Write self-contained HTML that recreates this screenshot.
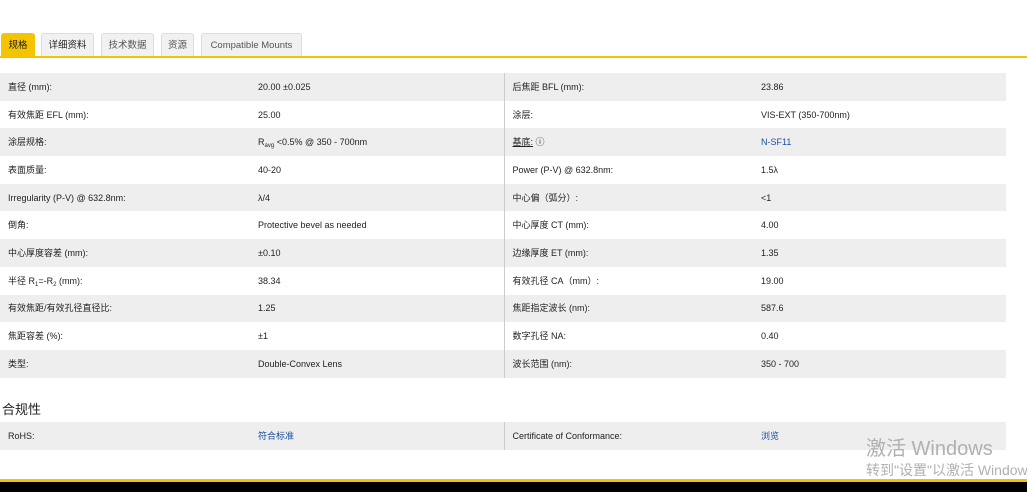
<!DOCTYPE html>
<html><head><meta charset="utf-8"><style>
body{margin:0;width:1027px;height:492px;overflow:hidden;background:#fff;font-family:"Liberation Sans","Noto Sans CJK SC",sans-serif;font-size:9px;color:#222;position:relative}
.tab{position:absolute;top:33px;height:23px;line-height:23px;text-align:center;background:#f1f1f1;border:1px solid #ddd;border-bottom:none;border-radius:3px 3px 0 0;box-sizing:border-box;color:#555;font-size:9.5px}
.tab.on{background:#f5c400;border-color:#f5c400;color:#222}
.line{position:absolute;top:56px;left:0;width:1027px;height:2px;background:#f5c400}
table{position:absolute;left:0;top:73px;width:1006px;border-collapse:collapse;table-layout:fixed}
td{height:27.7px;padding:0 0 0 8px;vertical-align:middle;line-height:12px;box-sizing:border-box;overflow:hidden;white-space:nowrap}
tr:nth-child(odd) td{background:#eee}
td.c3{border-left:1px solid #ccc}
a{color:#1a4f9c;text-decoration:none}
sub{font-size:6px;line-height:0;vertical-align:-2px}
</style></head><body>
<div class="tab on" style="left:1px;width:34px">规格</div>
<div class="tab" style="left:41px;width:53px;color:#222">详细资料</div>
<div class="tab" style="left:101px;width:53px">技术数据</div>
<div class="tab" style="left:161px;width:33px">资源</div>
<div class="tab" style="left:201px;width:101px">Compatible Mounts</div>
<div class="line"></div>
<table>
<colgroup><col style="width:250px"><col style="width:254px"><col style="width:249px"><col></colgroup>
<tr><td>直径 (mm):</td><td>20.00 ±0.025</td><td class="c3">后焦距 BFL (mm):</td><td>23.86</td></tr>
<tr><td>有效焦距 EFL (mm):</td><td>25.00</td><td class="c3">涂层:</td><td>VIS-EXT (350-700nm)</td></tr>
<tr><td>涂层规格:</td><td>R<sub>avg</sub> &lt;0.5% @ 350 - 700nm</td><td class="c3"><u>基底:</u> ⓘ</td><td><a>N-SF11</a></td></tr>
<tr><td>表面质量:</td><td>40-20</td><td class="c3">Power (P-V) @ 632.8nm:</td><td>1.5λ</td></tr>
<tr><td>Irregularity (P-V) @ 632.8nm:</td><td>λ/4</td><td class="c3">中心偏（弧分）:</td><td>&lt;1</td></tr>
<tr><td>倒角:</td><td>Protective bevel as needed</td><td class="c3">中心厚度 CT (mm):</td><td>4.00</td></tr>
<tr><td>中心厚度容差 (mm):</td><td>±0.10</td><td class="c3">边缘厚度 ET (mm):</td><td>1.35</td></tr>
<tr><td>半径 R<sub>1</sub>=-R<sub>2</sub> (mm):</td><td>38.34</td><td class="c3">有效孔径 CA（mm）:</td><td>19.00</td></tr>
<tr><td>有效焦距/有效孔径直径比:</td><td>1.25</td><td class="c3">焦距指定波长 (nm):</td><td>587.6</td></tr>
<tr><td>焦距容差 (%):</td><td>±1</td><td class="c3">数字孔径 NA:</td><td>0.40</td></tr>
<tr><td>类型:</td><td>Double-Convex Lens</td><td class="c3">波长范围 (nm):</td><td>350 - 700</td></tr>
</table>
<div style="position:absolute;left:2px;top:399px;font-size:13px;color:#222">合规性</div>
<table style="top:422px"><colgroup><col style="width:250px"><col style="width:254px"><col style="width:249px"><col></colgroup><tr><td>RoHS:</td><td><a>符合标准</a></td><td class="c3">Certificate of Conformance:</td><td><a>浏览</a></td></tr></table>
<div style="position:absolute;left:866px;top:432px;font-size:20px;color:#b0b0b0">激活 Windows</div>
<div style="position:absolute;left:866px;top:460px;font-size:14px;color:#b0b0b0;white-space:nowrap">转到"设置"以激活 Windows。</div>
<div style="position:absolute;left:0;top:479px;width:1027px;height:3px;background:#f5c400"></div>
<div style="position:absolute;left:0;top:482px;width:1027px;height:10px;background:#000"></div>
</body></html>
